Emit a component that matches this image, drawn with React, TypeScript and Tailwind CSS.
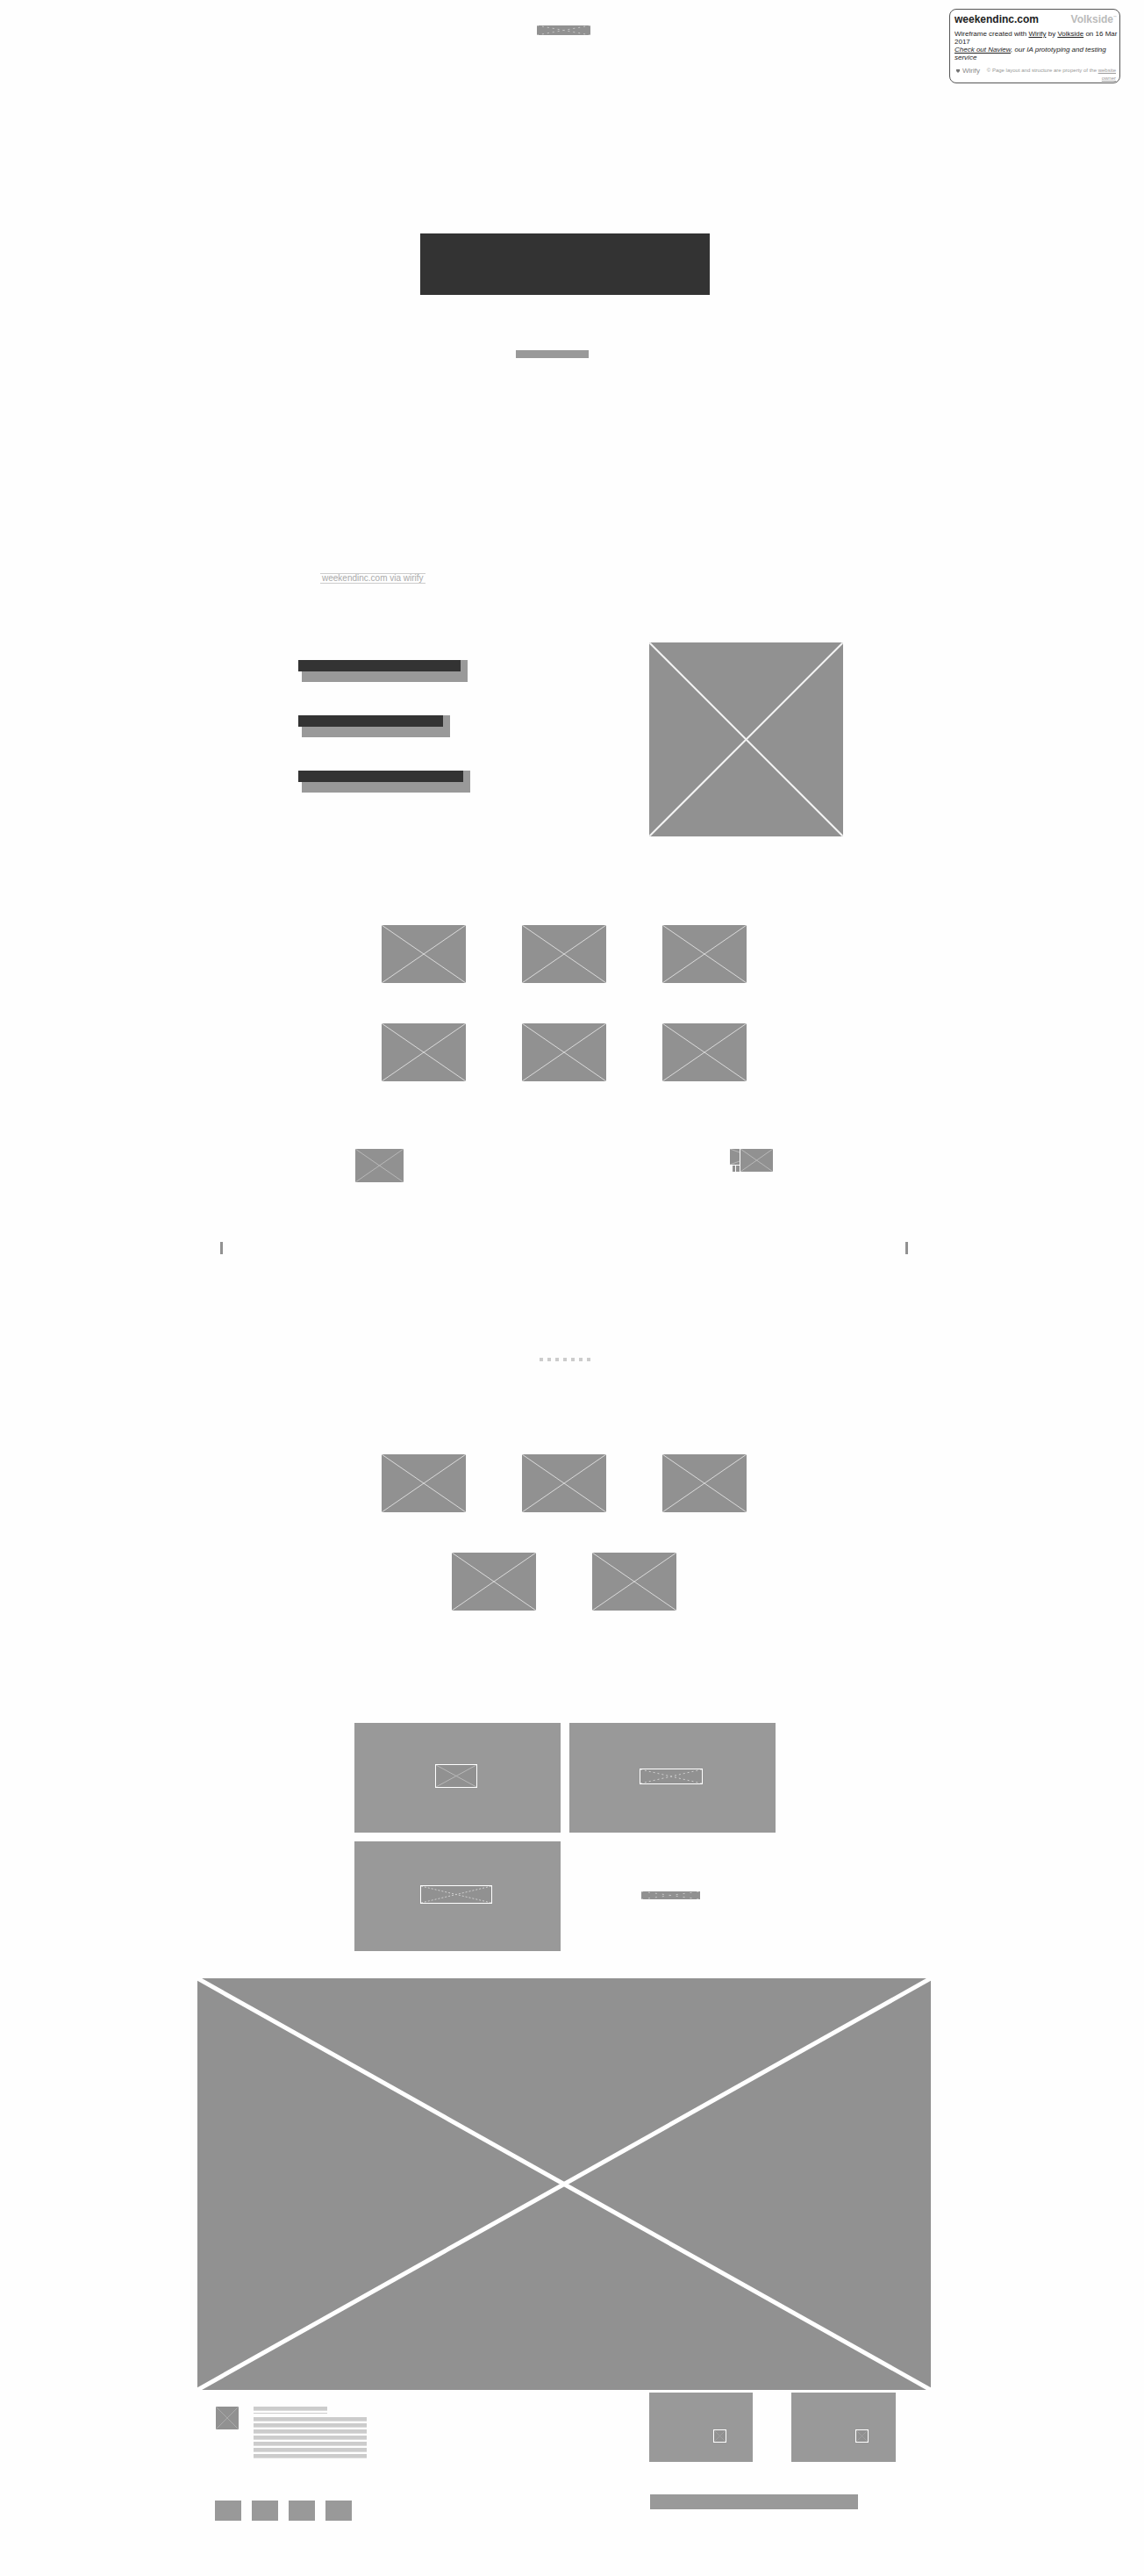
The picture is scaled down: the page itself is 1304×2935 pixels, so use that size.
type ImageBoxProps = {
  className: string;
  stroke?: string;
  weight?: number;
  dash?: string;
};

function ImageBox({ className, stroke = "#dadada", weight = 1, dash }: ImageBoxProps) {
  return (
    <div className={`overflow-hidden bg-[#919191] ${className}`}>
      <svg className="block h-full w-full" aria-hidden="true" stroke={stroke} strokeWidth={weight} strokeDasharray={dash}>
        <line x1="0" y1="0" x2="100%" y2="100%" />
        <line x1="0" y1="100%" x2="100%" y2="0" />
      </svg>
    </div>
  );
}

function CreditCard() {
  return (
    <aside className="absolute top-[10px] right-[27px] h-[85px] w-[195px] rounded-[8px] border border-[#555] bg-white pt-[4px] pl-[5px] text-[#222]">
      <div className="flex items-center justify-between pr-[3px] leading-[15px]">
        <strong className="text-[12px]">weekendinc.com</strong>
        <span className="flex text-[12px] font-bold text-[#bbb]">
          Volkside
          <span className="text-[4px] leading-[10px]">™</span>
        </span>
      </div>
      <p className="mt-[4px] text-[8px] leading-[9px]">
        Wireframe created with <a href="#wirify" className="underline">Wirify</a> by{" "}
        <a href="#volkside" className="underline">Volkside</a> on 16 Mar
        <br />
        2017
      </p>
      <p className="text-[8px] leading-[9px] italic">
        <a href="#naview" className="underline">Check out Naview</a>, our IA prototyping and testing
        <br />
        service
      </p>
      <div className="mt-[6px] flex items-start pr-[4px] text-[#888]">
        <span className="flex items-center gap-[3px] pl-[2px] text-[8px] leading-[9px]">
          <svg viewBox="0 0 4 4" className="size-[4px]" aria-hidden="true">
            <path d="M0 0h4v2L2 4 0 2z" fill="#777" />
          </svg>
          Wirify
        </span>
        <p className="flex-1 text-right text-[6px] leading-[9px] text-[#999]">
          © Page layout and structure are property of the{" "}
          <a href="#owner" className="underline">
            website
            <br />
            owner
          </a>
        </p>
      </div>
    </aside>
  );
}

const features = [
  { dark: "w-[185px]", grey: "w-[189px]" },
  { dark: "w-[165px]", grey: "w-[169px]" },
  { dark: "w-[188px]", grey: "w-[192px]" },
];

function Feature({ dark, grey }: { dark: string; grey: string }) {
  return (
    <div className="grid">
      <div className={`col-start-1 row-start-1 ml-1 h-[25px] bg-[#999] ${grey}`} />
      <div className={`col-start-1 row-start-1 h-[13px] bg-[#333] ${dark}`} />
    </div>
  );
}

function Gallery({ count, className }: { count: number; className: string }) {
  return (
    <section className={`mx-auto flex max-w-[480px] flex-wrap justify-center gap-x-16 gap-y-[46px] ${className}`}>
      {Array.from({ length: count }, (_, i) => (
        <ImageBox key={i} className="h-[66px] w-24" />
      ))}
    </section>
  );
}

const panel = "flex h-[125px] items-center justify-center bg-[#999] pr-[3px] pb-[4px]";

export default function App() {
  return (
    <div className="relative min-h-screen bg-[#fefefe] pr-[18px] font-['Liberation_Sans',sans-serif]">
      <CreditCard />

      <header className="flex flex-col items-center pt-[29px]">
        <ImageBox className="mr-px h-[11px] w-[61px]" stroke="#c8c8c8" dash="2 4" />
        <div className="mt-[226px] ml-[2px] h-[70px] w-[330px] bg-[#333]" />
        <div className="mt-[63px] mr-[27px] h-[9px] w-[83px] bg-[#999]" />
      </header>

      <main>
        <section className="mx-auto mt-[245px] max-w-[636px] pl-[15px]">
          <div className="ml-[25px] w-fit border-y border-[#ccc] px-[2px] text-[10px] leading-[10px] text-[#aaa]">
            weekendinc.com via wirify
          </div>
          <div className="mt-[67px] flex justify-between">
            <div className="flex flex-col gap-[38px] pt-5">
              {features.map((feature, i) => (
                <Feature key={i} {...feature} />
              ))}
            </div>
            <ImageBox className="size-[221px] rounded-[2px]" stroke="#f4f4f4" weight={2} />
          </div>
        </section>

        <Gallery count={6} className="mt-[101px]" />

        <section className="mx-auto mt-[77px] flex max-w-[476px] items-start justify-between">
          <ImageBox className="h-[38px] w-[55px]" stroke="#b8b8b8" />
          <div className="flex gap-px">
            <div className="flex flex-col items-end gap-px">
              <svg viewBox="0 0 11 18" className="h-[18px] w-[11px] bg-[#919191]" stroke="#b8b8b8" aria-hidden="true">
                <path d="M0 0L11 4M0 18L11 14" />
              </svg>
              <div className="flex gap-px">
                <div className="h-[7px] w-[3px] bg-[#919191]" />
                <div className="h-[7px] w-[4px] bg-[#919191]" />
              </div>
            </div>
            <ImageBox className="h-[26px] w-[37px]" stroke="#b8b8b8" />
          </div>
        </section>

        <section className="mx-auto mt-[68px] max-w-[784px]">
          <div className="flex justify-between">
            <button type="button" aria-label="Previous" className="h-[14px] w-[3px] bg-[#919191]" />
            <button type="button" aria-label="Next" className="h-[14px] w-[3px] bg-[#919191]" />
          </div>
          <div className="mt-[118px] flex justify-center gap-[5px] pl-[2px]">
            {Array.from({ length: 7 }, (_, i) => (
              <button key={i} type="button" aria-label={`Slide ${i + 1}`} className="size-1 bg-[#ccc]" />
            ))}
          </div>
        </section>

        <Gallery count={5} className="mt-[106px]" />

        <section className="mx-auto mt-[128px] grid max-w-[482px] grid-cols-2 gap-[10px] pl-[2px]">
          <div className={panel}>
            <ImageBox className="h-[27px] w-[48px] border border-white" stroke="#b8b8b8" />
          </div>
          <div className={panel}>
            <ImageBox className="h-[18px] w-[72px] border border-white" stroke="#d0d0d0" dash="2 3" />
          </div>
          <div className={panel}>
            <ImageBox className="h-[21px] w-[82px] border border-white" stroke="#d0d0d0" dash="2 2" />
          </div>
          <div className="flex items-center justify-center pr-[4px] pb-[2px]">
            <ImageBox className="h-[9px] w-[67px]" stroke="#c8c8c8" dash="2 6" />
          </div>
        </section>

        <ImageBox className="mx-auto mt-[31px] h-[469px] max-w-[836px]" stroke="#fff" weight={5} />
      </main>

      <footer className="mx-auto flex max-w-[836px] justify-between pr-10 pb-[63px] pl-5">
        <div className="pt-[19px]">
          <div className="flex gap-[17px] pl-px">
            <ImageBox className="size-[26px]" stroke="#aaa" />
            <div>
              <div className="h-[8px] w-[84px] border-b border-[#ccc]">
                <div className="h-[5px] border-b border-[#ddd] bg-[#ccc]" />
              </div>
              <div className="mt-1 flex flex-col gap-[2px]">
                {Array.from({ length: 7 }, (_, i) => (
                  <div key={i} className="h-[5px] w-[129px] border-b border-[#ddd] bg-[#ccc]" />
                ))}
              </div>
            </div>
          </div>
          <div className="mt-12 flex gap-3">
            {Array.from({ length: 4 }, (_, i) => (
              <div key={i} className="h-[23px] w-[30px] bg-[#999]" />
            ))}
          </div>
        </div>
        <div className="w-[281px] pt-[3px]">
          <div className="flex justify-between">
            <div className="flex h-[79px] w-[118px] justify-end bg-[#999] pt-[42px] pr-[30px]">
              <ImageBox className="size-[15px] border border-white" stroke="#a0a0a0" />
            </div>
            <div className="flex h-[79px] w-[119px] justify-end bg-[#999] pt-[42px] pr-[31px]">
              <ImageBox className="size-[15px] border border-white" stroke="#a0a0a0" />
            </div>
          </div>
          <div className="mt-[37px] ml-px h-[17px] w-[237px] bg-[#999]" />
        </div>
      </footer>
    </div>
  );
}
